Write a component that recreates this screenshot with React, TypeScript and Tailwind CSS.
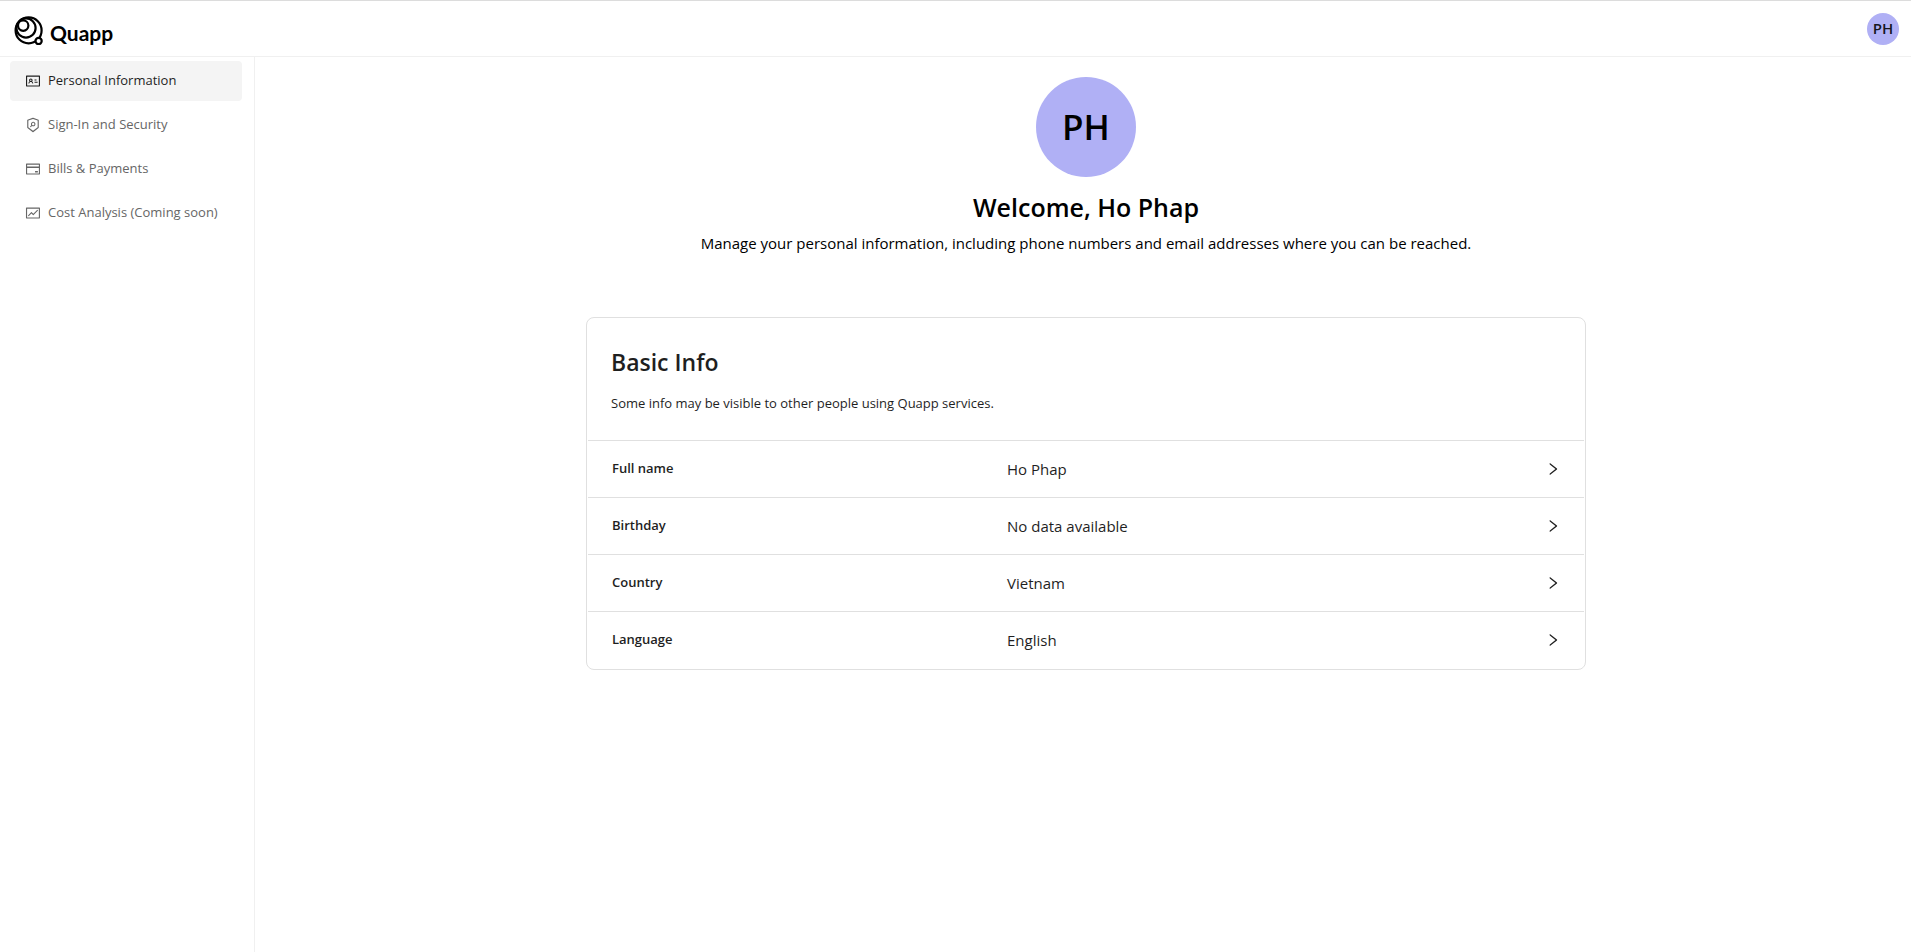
import React from 'react';
import {
  AiOutlineCreditCard,
  AiOutlineFund,
  AiOutlineIdcard,
  AiOutlineRight,
  AiOutlineSecurityScan,
} from 'react-icons/ai';

const menuItems = [
  { label: 'Personal Information', icon: AiOutlineIdcard, active: true },
  { label: 'Sign-In and Security', icon: AiOutlineSecurityScan, active: false },
  { label: 'Bills & Payments', icon: AiOutlineCreditCard, active: false },
  { label: 'Cost Analysis (Coming soon)', icon: AiOutlineFund, active: false },
];

const basicInfo = [
  { label: 'Full name', value: 'Ho Phap' },
  { label: 'Birthday', value: 'No data available' },
  { label: 'Country', value: 'Vietnam' },
  { label: 'Language', value: 'English' },
];

const Logo: React.FC = () => (
  <a href="#" className="flex items-center gap-1.5 text-black">
    <svg viewBox="0 0 32 32" className="size-8" fill="none" stroke="currentColor" strokeWidth="2.2">
      <circle cx="16.6" cy="17.4" r="13" />
      <circle cx="14" cy="15" r="9.6" />
      <circle cx="11.2" cy="12.6" r="5.2" />
      <circle cx="26.6" cy="28" r="3.1" fill="white" />
    </svg>
    <span className="mt-2 font-['Lato',sans-serif] text-[21px] leading-8 font-bold">Quapp</span>
  </a>
);

const Header: React.FC = () => (
  <header className="flex h-[57px] items-center justify-between border-y border-t-[#dcdcdc] border-b-[#f0f0f0] px-3">
    <Logo />
    <button className="size-8 rounded-full bg-[#b0b0f5] text-[15px] font-semibold text-black/90">PH</button>
  </header>
);

const Sidebar: React.FC = () => (
  <nav className="w-[255px] shrink-0 border-r border-[#f0f0f0] pt-1 pr-3 pl-2.5">
    <ul className="flex flex-col gap-1">
      {menuItems.map(({ label, icon: Icon, active }) => (
        <li key={label}>
          <a
            href="#"
            className={`flex h-10 items-center gap-[7px] rounded px-[15px] text-[13px] whitespace-nowrap ${
              active ? 'bg-[#f4f4f4] text-[#1f1f1f]' : 'text-[#666666]'
            }`}
          >
            <Icon className="size-4" />
            {label}
          </a>
        </li>
      ))}
    </ul>
  </nav>
);

const InfoCard: React.FC = () => (
  <section className="mt-[60px] w-full max-w-[1000px] rounded-lg border border-[#e0e0e0] px-px pb-px text-[#1f1f1f]">
    <div className="px-[23px] pt-6 pb-[25px]">
      <h2 className="text-[23px] leading-10 font-semibold">Basic Info</h2>
      <p className="mt-[9px] text-[13px] leading-6">Some info may be visible to other people using Quapp services.</p>
    </div>
    <ul>
      {basicInfo.map(({ label, value }) => (
        <li key={label} className="border-t border-[#e0e0e0]">
          <button className="flex h-14 w-full items-center pr-[23px] pl-6 text-left">
            <span className="w-[395px] text-[13px] font-semibold">{label}</span>
            <span className="flex-1 text-[15px]">{value}</span>
            <AiOutlineRight className="size-4" />
          </button>
        </li>
      ))}
    </ul>
  </section>
);

const App: React.FC = () => {
  return (
    <div className="flex min-h-screen flex-col bg-white font-['Open_Sans',sans-serif]">
      <Header />
      <div className="flex flex-1">
        <Sidebar />
        <main className="ml-1.5 flex flex-1 flex-col items-center pt-5">
          <div className="flex size-[100px] items-center justify-center rounded-full bg-[#b0b0f5] text-[35px] font-semibold text-black">
            PH
          </div>
          <h1 className="mt-2.5 text-[25px] leading-10 font-semibold text-black">Welcome, Ho Phap</h1>
          <p className="mt-1 mb-0.5 text-[15px] leading-6 text-black">
            Manage your personal information, including phone numbers and email addresses where you can be reached.
          </p>
          <InfoCard />
        </main>
      </div>
    </div>
  );
};

export default App;
